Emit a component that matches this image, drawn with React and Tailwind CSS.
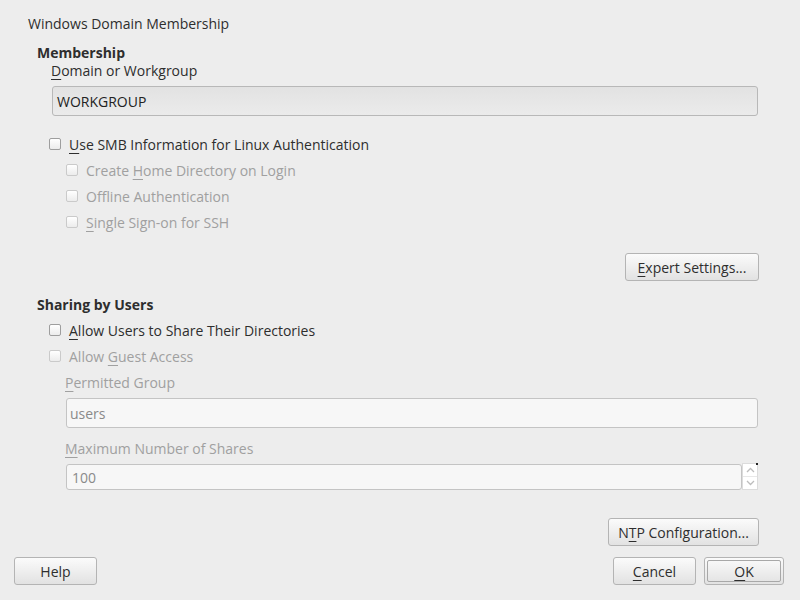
import React from 'react';

const font = { fontFamily: '"Open Sans", "Noto Sans", sans-serif' };

const Check = ({ disabled }) => (
  <span
    className={`inline-block w-[12px] h-[12px] rounded-[2px] border bg-gradient-to-b from-white to-[#ececec] ${
      disabled ? 'border-[#cacaca]' : 'border-[#9e9e9e]'
    }`}
  />
);

const CheckRow = ({ indent, disabled, children }) => (
  <div className={`h-[26px] flex items-center ${indent}`}>
    <Check disabled={disabled} />
    <span className={`ml-[8px] ${disabled ? 'text-[#a0a0a0]' : 'text-[#2e2e2e]'}`}>{children}</span>
  </div>
);

const Button = ({ children, className = '', isDefault }) => (
  <button
    className={`h-[28px] rounded-[3px] border border-[#b4b4b4] bg-gradient-to-b from-[#fbfbfb] to-[#e2e2e2] text-[#2e2e2e] text-[14px] flex items-center justify-center ${
      isDefault ? 'p-[2px]' : ''
    } ${className}`}
  >
    {isDefault ? (
      <span className="w-full h-full rounded-[2px] border border-[#a8a8a8] flex items-center justify-center">
        {children}
      </span>
    ) : (
      children
    )}
  </button>
);

const U = ({ children }) => <span className="underline underline-offset-[3px] decoration-1">{children}</span>;

export default function App() {
  return (
    <div className="w-[800px] h-[600px] bg-[#ededed] flex flex-col text-[14px] text-[#2e2e2e]" style={font}>
      <div className="flex-1 pl-[28px] pr-[42px]">
        <div className="h-[20px] mt-[14px] leading-[20px]">Windows Domain Membership</div>

        <div className="pl-[9px]">
          <div className="h-[18px] mt-[10px] leading-[18px] font-bold">Membership</div>
          <div className="pl-[14px]">
            <div className="h-[18px] leading-[18px]">
              <U>D</U>omain or Workgroup
            </div>
            <div className="mt-[6px] ml-[1px] h-[30px] rounded-[3px] border border-[#b8b8b8] bg-gradient-to-b from-[#e2e2e2] to-[#ebebeb] flex items-center pl-[4px] text-[#222]">
              WORKGROUP
            </div>
          </div>

          <div className="mt-[15px]">
            <CheckRow indent="pl-[12px]">
              <U>U</U>se SMB Information for Linux Authentication
            </CheckRow>
            <CheckRow indent="pl-[29px]" disabled>
              Create <U>H</U>ome Directory on Login
            </CheckRow>
            <CheckRow indent="pl-[29px]" disabled>
              Of<U>fl</U>ine Authentication
            </CheckRow>
            <CheckRow indent="pl-[29px]" disabled>
              <U>S</U>ingle Sign-on for SSH
            </CheckRow>
          </div>

          <div className="flex justify-end mt-[18px] -mr-[1px]">
            <Button className="w-[134px] h-[27px]">
              <U>E</U>xpert Settings...
            </Button>
          </div>

          <div className="h-[18px] mt-[15px] leading-[18px] font-bold">Sharing by Users</div>
          <div className="mt-[3px]">
            <CheckRow indent="pl-[12px]">
              <U>A</U>llow Users to Share Their Directories
            </CheckRow>
            <CheckRow indent="pl-[12px]" disabled>
              Allow <U>G</U>uest Access
            </CheckRow>
          </div>

          <div className="pl-[28px] text-[#a0a0a0]">
            <div className="h-[18px] mt-[5px] leading-[18px]">
              <U>P</U>ermitted Group
            </div>
            <div className="mt-[6px] ml-[1px] h-[30px] rounded-[3px] border border-[#c4c4c4] bg-[#f7f7f7] flex items-center pl-[3px] text-[#8a8a8a]">
              users
            </div>
            <div className="h-[18px] mt-[12px] leading-[18px]">
              <U>M</U>aximum Number of Shares
            </div>
            <div className="mt-[6px] ml-[1px] h-[26px] flex">
              <div className="flex-1 rounded-[3px] border border-[#c4c4c4] bg-[#f7f7f7] flex items-center pl-[5px] text-[#8a8a8a]">
                100
              </div>
              <div className="relative w-[16px] -mt-[1px] h-[27px] bg-white border border-[#dcdcdc] flex flex-col">
                <div className="absolute -top-[1px] -right-[1px] w-[2px] h-[2px] bg-[#222]" />
                <div className="flex-1 flex items-center justify-center border-b border-[#e8e8e8]">
                  <svg width="9" height="6" viewBox="0 0 9 6">
                    <path d="M1 5 L4.5 1.5 L8 5" fill="none" stroke="#bdbdbd" strokeWidth="1.3" />
                  </svg>
                </div>
                <div className="flex-1 flex items-center justify-center">
                  <svg width="9" height="6" viewBox="0 0 9 6">
                    <path d="M1 1 L4.5 4.5 L8 1" fill="none" stroke="#bdbdbd" strokeWidth="1.3" />
                  </svg>
                </div>
              </div>
            </div>
          </div>

          <div className="flex justify-end mt-[28px] -mr-[1px]">
            <Button className="w-[151px]">
              N<U>T</U>P Configuration...
            </Button>
          </div>
        </div>
      </div>

      <div className="flex items-center pl-[14px] pr-[16px] pb-[15px]">
        <Button className="w-[83px]">Help</Button>
        <div className="flex-1" />
        <Button className="w-[83px]">
          <U>C</U>ancel
        </Button>
        <Button className="w-[80px] ml-[8px]" isDefault>
          <U>O</U>K
        </Button>
      </div>
    </div>
  );
}
